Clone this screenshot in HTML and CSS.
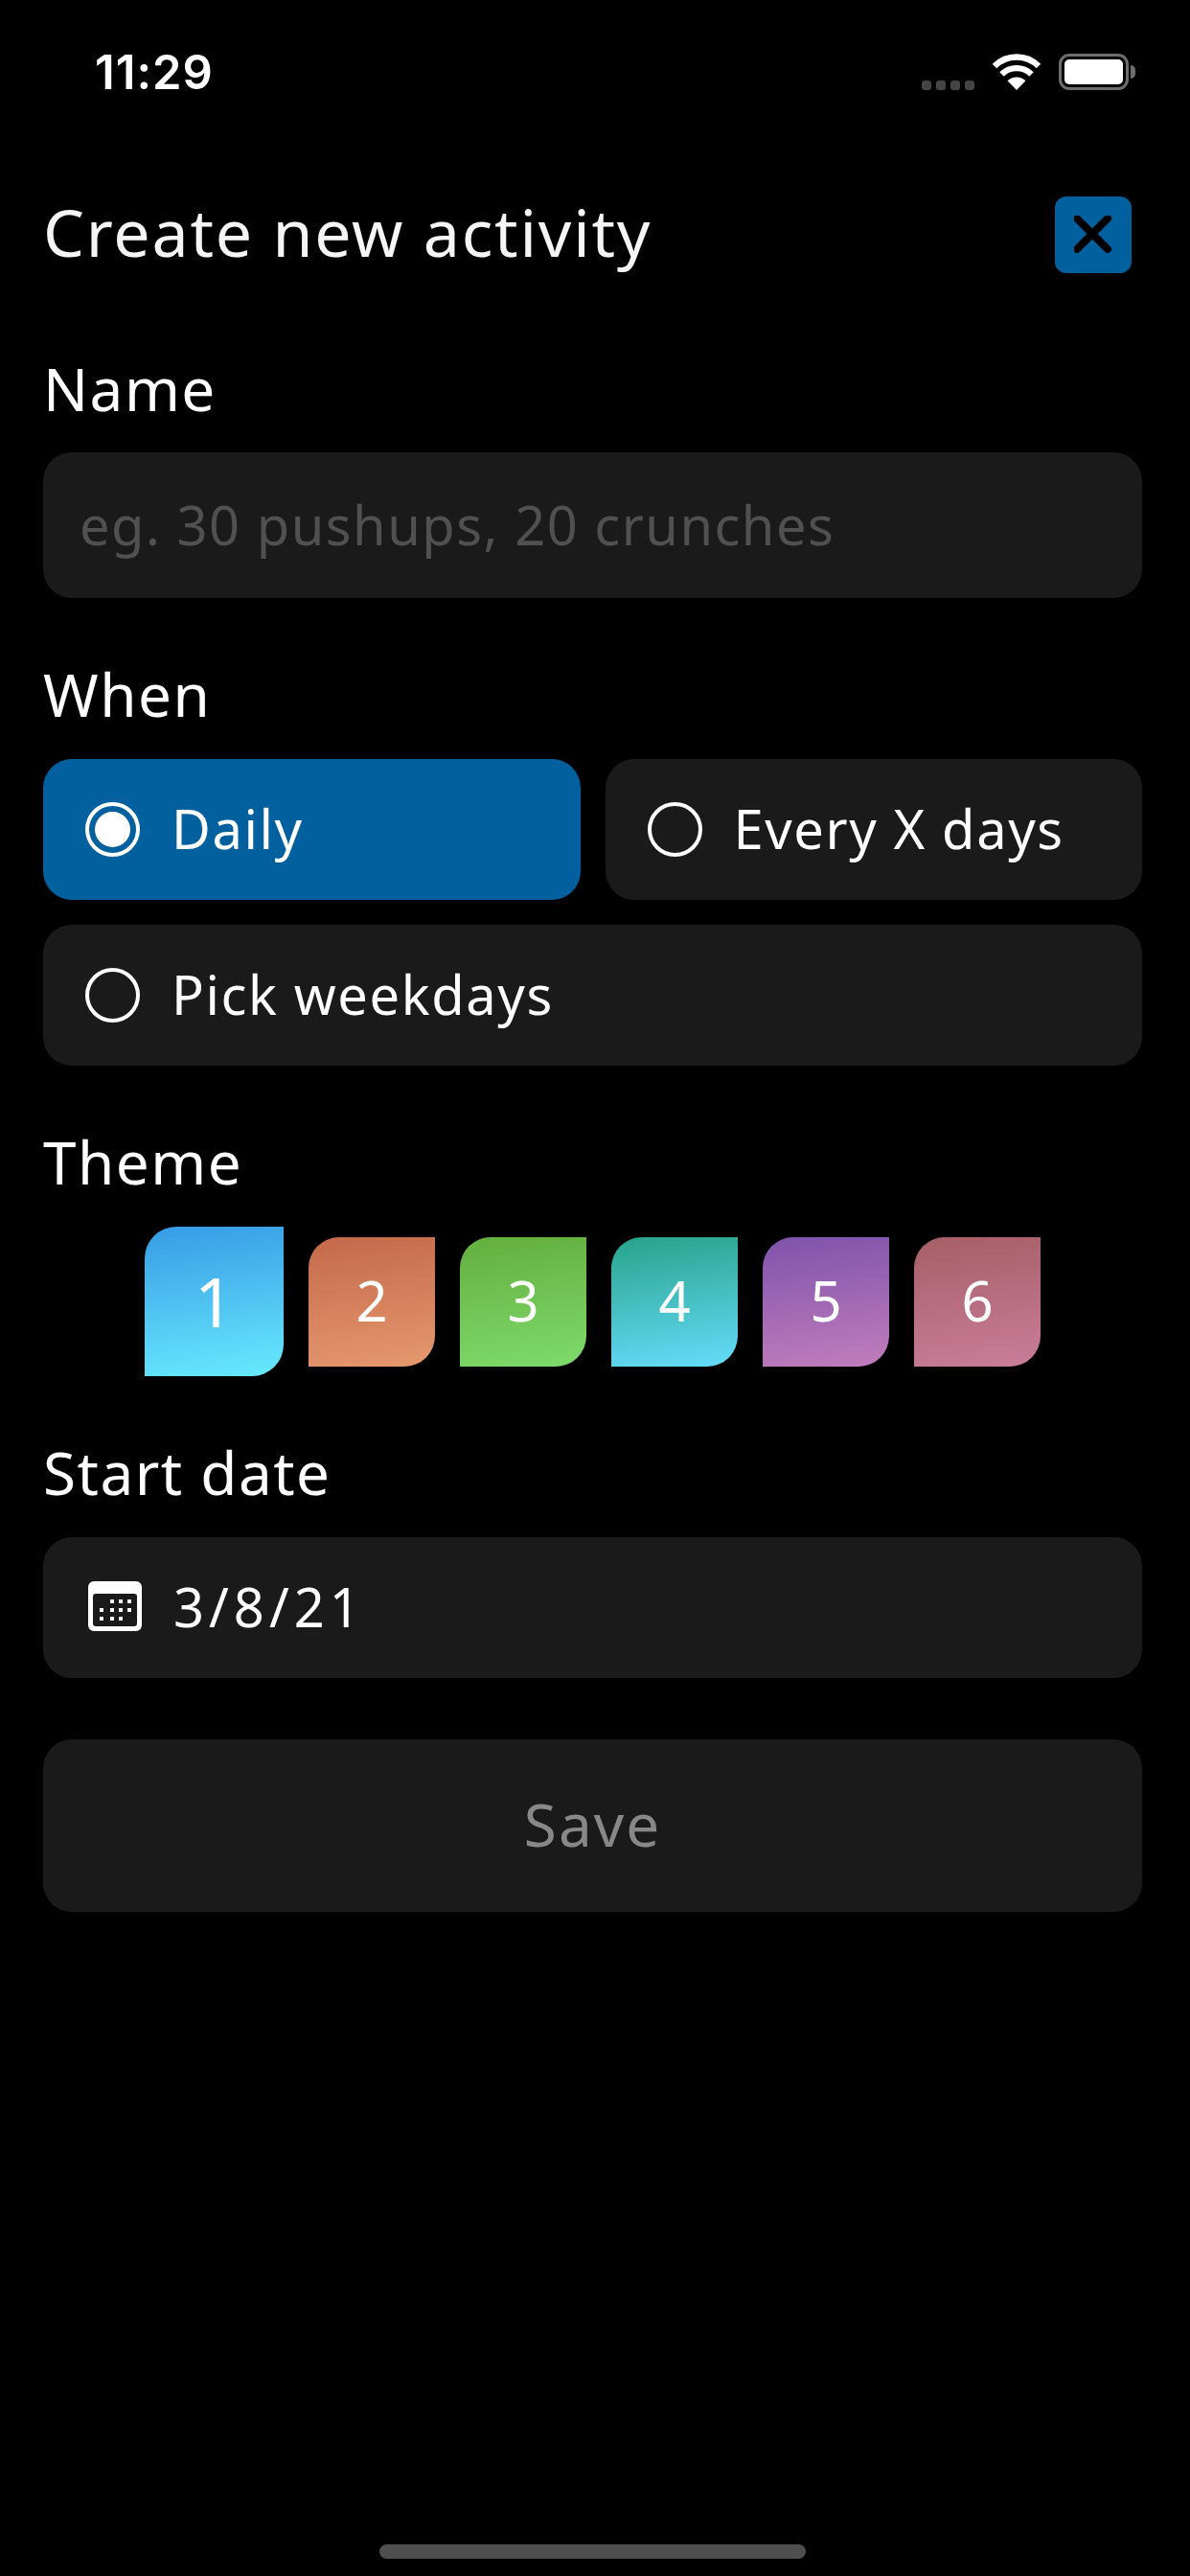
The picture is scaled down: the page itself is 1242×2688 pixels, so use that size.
FILE: index.html
```html
<!DOCTYPE html>
<html lang="en">
<head>
<meta charset="utf-8">
<title>Create new activity</title>
<link rel="stylesheet" href="styles.css">
</head>
<body>
<main class="screen">
  <div class="status">
    <span class="time">11:29</span>
    <div class="status-icons">
      <div class="signal"><i></i><i></i><i></i><i></i></div>
      <svg class="wifi" viewBox="0 0 52 38"><path d="M26 38 16.500 28.300a13.500 13.500 0 0 1 19 0Z" fill="#fff"/><path d="M10.500 21.500a22 22 0 0 1 31 0" fill="none" stroke="#fff" stroke-width="6.400"/><path d="M3 13a32.500 32.500 0 0 1 46 0" fill="none" stroke="#fff" stroke-width="6.400"/></svg>
      <div class="battery"><div class="battery-body"><div class="battery-fill"></div></div><div class="battery-tip"></div></div>
    </div>
  </div>

  <header class="header">
    <h1 class="title">Create new activity</h1>
    <button class="close" aria-label="Close">
      <svg viewBox="0 0 40 40" class="close-icon"><path d="M3 3 35 35M35 3 3 35" stroke="#000" stroke-width="8" stroke-linecap="round"/></svg>
    </button>
  </header>

  <label class="label label-first">Name</label>
  <div class="field field-tall"><span class="placeholder">eg. 30 pushups, 20 crunches</span></div>

  <label class="label">When</label>
  <div class="options">
    <div class="option option-on"><span class="radio radio-on"></span><span>Daily</span></div>
    <div class="option"><span class="radio"></span><span>Every X days</span></div>
    <div class="option option-wide"><span class="radio"></span><span>Pick weekdays</span></div>
  </div>

  <label class="label">Theme</label>
  <div class="themes">
    <div class="swatch swatch-big t1">1</div>
    <div class="swatch t2">2</div>
    <div class="swatch t3">3</div>
    <div class="swatch t4">4</div>
    <div class="swatch t5">5</div>
    <div class="swatch t6">6</div>
  </div>

  <label class="label">Start date</label>
  <div class="field date">
    <svg class="cal" viewBox="0 0 56 52"><path fill="#fff" fill-rule="evenodd" d="M6 0h44a6 6 0 0 1 6 6v40a6 6 0 0 1-6 6H6a6 6 0 0 1-6-6V6a6 6 0 0 1 6-6ZM8 13a3 3 0 0 0-3 3v28a3 3 0 0 0 3 3h40a3 3 0 0 0 3-3V16a3 3 0 0 0-3-3Z"/><g fill="#fff"><rect x="23" y="19" width="4" height="4"/><rect x="32" y="19" width="4" height="4"/><rect x="41" y="19" width="4" height="4"/><rect x="12" y="28" width="4" height="4"/><rect x="23" y="28" width="4" height="4"/><rect x="32" y="28" width="4" height="4"/><rect x="41" y="28" width="4" height="4"/><rect x="12" y="37" width="4" height="4"/><rect x="23" y="37" width="4" height="4"/><rect x="32" y="37" width="4" height="4"/></g></svg>
    <span class="date-text">3/8/21</span>
  </div>

  <button class="save">Save</button>

  <div class="home"></div>
</main>
</body>
</html>
```

FILE: styles.css
```css
* { box-sizing: border-box; }
html, body { margin: 0; background: #000; }
body { font-family: "Noto Sans", "Open Sans", sans-serif; color: #fff; }
.screen { width: 1242px; height: 2688px; padding: 0 50px 18px 45px; display: flex; flex-direction: column; }

.status { height: 150px; flex: none; display: flex; align-items: center; justify-content: space-between; padding: 0 7px 0 54px; }
.time { font-family: Inter, sans-serif; font-weight: 600; font-size: 49px; letter-spacing: 1px; }
.status-icons { display: flex; align-items: flex-start; }
.signal { display: flex; gap: 5px; margin-top: 28px; }
.signal i { width: 10px; height: 10px; border-radius: 3px; background: #444; }
.wifi { width: 52px; height: 38px; margin: 0 18px; }
.battery { display: flex; align-items: center; }
.battery-body { width: 73px; height: 38px; border: 3px solid #6e6e6e; border-radius: 11px; padding: 3px; }
.battery-fill { height: 100%; background: #fff; border-radius: 5px; }
.battery-tip { width: 5px; height: 14px; background: #6e6e6e; border-radius: 0 6px 6px 0; margin-left: 2px; }

.header { display: flex; justify-content: space-between; align-items: center; margin: 55px 11px 0 0; height: 80px; flex: none; }
.title { margin: 0; font-weight: 400; font-size: 68px; line-height: 80px; letter-spacing: 1.8px; padding: 0 0 6px 0; color: #f5f5f5; }
.close { width: 80px; height: 80px; border: 0; border-radius: 12px; background: #02609f; padding: 20px; display: flex; }
.close-icon { width: 40px; height: 40px; }

.label { display: block; font-size: 62px; line-height: 80px; height: 80px; margin: 60px 0 28px; letter-spacing: 1.5px; flex: none; }
.label-first { margin-top: 80px; margin-bottom: 27px; }

.field { display: flex; align-items: center; background: #1a1a1a; border-radius: 30px; font-size: 56px; height: 147px; flex: none; padding: 0 0 3px 38px; }
.field-tall { height: 152px; }
.placeholder { color: #505050; letter-spacing: 1.5px; }

.options { display: grid; grid-template-columns: 1fr 1fr; gap: 26px; }
.option { display: flex; align-items: center; gap: 33px; height: 147px; padding-left: 44px; background: #1a1a1a; border-radius: 30px; font-size: 56px; letter-spacing: 1.6px; }
.option > span:last-child { padding-bottom: 3px; }
.option-on { background: #02609f; }
.option-wide { grid-column: 1 / 3; }
.radio { width: 57px; height: 57px; border-radius: 50%; border: 4px solid #fff; flex: none; position: relative; }
.radio-on::after { content: ""; position: absolute; inset: 6px; background: #fff; border-radius: 50%; }

.themes { display: flex; justify-content: center; align-items: center; gap: 26px; height: 156px; flex: none; }
.swatch { width: 132px; height: 135px; border-radius: 32px 0 32px 0; display: flex; align-items: center; justify-content: center; font-size: 58px; padding-bottom: 3px; }
.swatch-big { width: 145px; height: 156px; border-radius: 33px 0 33px 0; font-size: 72px; }
.t1 { background: linear-gradient(172deg, #379be5, #68eafe); }
.t2 { background: linear-gradient(172deg, #c4694a, #e5986e); }
.t3 { background: linear-gradient(172deg, #63ae3f, #7edb6b); }
.t4 { background: linear-gradient(172deg, #27a38a, #66dcfb); }
.t5 { background: linear-gradient(172deg, #7e53ab, #c27dbc); }
.t6 { background: linear-gradient(172deg, #a65f66, #c97d9a); }

.date { padding-left: 47px; gap: 33px; }
.date-text { letter-spacing: 5px; }
.cal { width: 56px; height: 52px; flex: none; }

.save { margin-top: 64px; height: 180px; flex: none; border: 0; border-radius: 30px; background: #1a1a1a; color: #888; font: inherit; font-size: 62px; letter-spacing: 2px; padding: 0 0 4px; }

.home { margin: auto auto 0; width: 445px; height: 15px; border-radius: 8px; background: #4f4f4f; flex: none; }
```
